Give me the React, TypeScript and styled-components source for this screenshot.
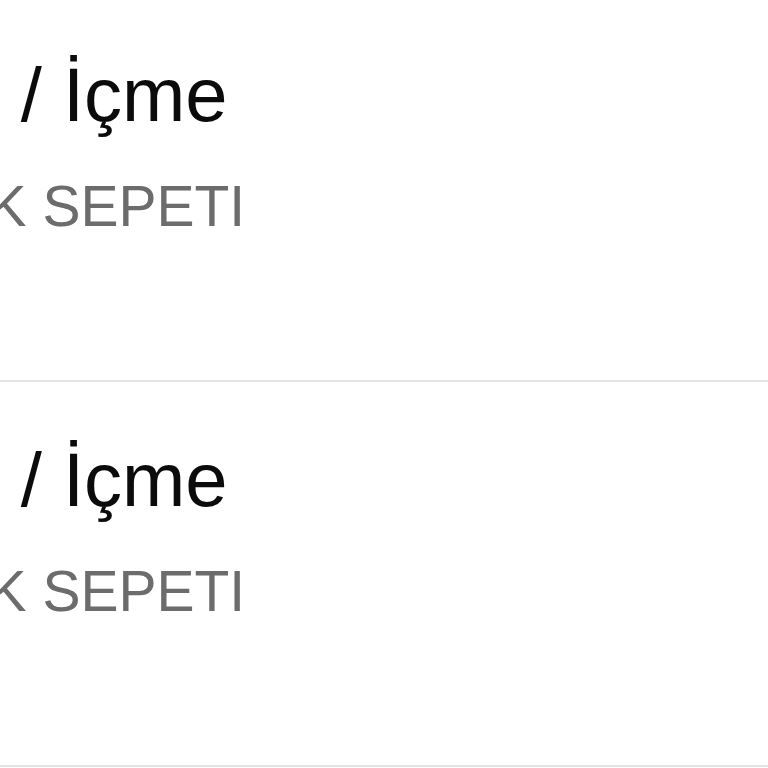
import styled, { createGlobalStyle } from "styled-components";

const GlobalStyle = createGlobalStyle`
    html, body {
        margin: 0;
        padding: 0;
        background: #ffffff;
        overflow: hidden;
    }
`

const List = styled.ul`
    list-style: none;
    margin: -3px 0 0 0;
    padding: 0;
    font-family: "Liberation Sans", Arial, sans-serif;
`

const Row = styled.li`
    height: 385px;
    box-sizing: border-box;
    padding-top: 60px;
    border-bottom: 2px solid #e4e4e4;
    overflow: hidden;
    white-space: nowrap;
`

const Title = styled.div<{ $indent: number }>`
    font-size: 76px;
    line-height: 76px;
    color: #0b0b0b;
    margin-left: ${props => props.$indent}px;
`

const Subtitle = styled.div<{ $indent: number }>`
    margin-top: 45px;
    font-size: 57px;
    line-height: 57px;
    color: #6c6c6c;
    margin-left: ${props => props.$indent}px;
`

const items = [
    { title: "Yemek / İçme", merchant: "YEMEK SEPETI" },
    { title: "Yemek / İçme", merchant: "YEMEK SEPETI" },
]

export default function App() {
    return (
        <>
            <GlobalStyle />
            <List>
                {items.map((item, i) => (
                    <Row key={i}>
                        <Title $indent={-230}>{item.title}</Title>
                        <Subtitle $indent={-173}>{item.merchant}</Subtitle>
                    </Row>
                ))}
            </List>
        </>
    )
}
